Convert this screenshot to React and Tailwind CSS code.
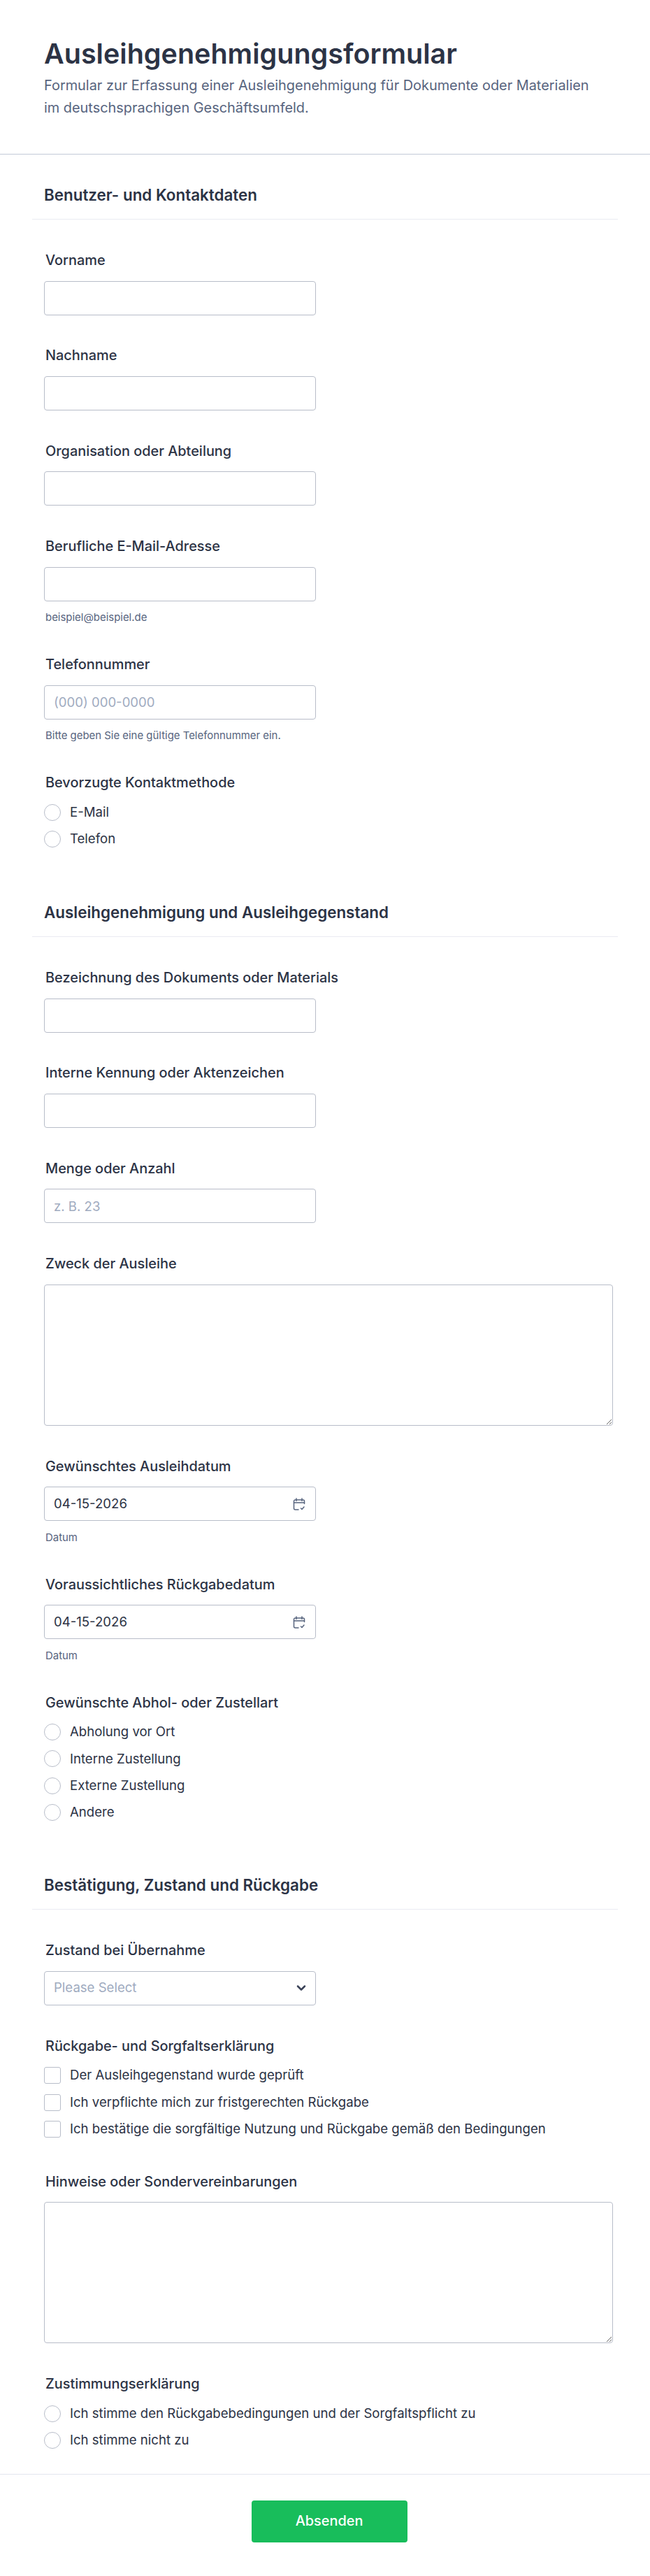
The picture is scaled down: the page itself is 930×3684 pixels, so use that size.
import React from "react";
import { ChevronDown } from "lucide-react";

function Label({ children }) {
  return <label className="block pl-[2px] text-[19.9px] leading-[24px] font-medium text-[#2c3345]">{children}</label>;
}

function Hint({ children }) {
  return <p className="mt-[14.6px] pl-[2px] text-[14.93px] leading-[18px] text-[#57647e]">{children}</p>;
}

function TextField({ label, placeholder, hint }) {
  return (
    <div className="pt-[23px] pb-[22.9px]">
      <Label>{label}</Label>
      <input
        type="text"
        placeholder={placeholder}
        className="mt-[17.5px] block h-[49px] w-[389px] rounded-[4px] border border-[#b8bdc9] bg-white px-[13px] text-[18.58px] text-[#2c3345] placeholder:text-[#9fabbf] outline-none"
      />
      {hint && <Hint>{hint}</Hint>}
    </div>
  );
}

function TextArea({ label }) {
  return (
    <div className="pt-[23px] pb-[22.9px]">
      <Label>{label}</Label>
      <textarea className="mt-[17.5px] block h-[202px] w-[814px] rounded-[4px] border border-[#b8bdc9] bg-white outline-none" />
    </div>
  );
}

function DateField({ label }) {
  return (
    <div className="pt-[23px] pb-[22.9px]">
      <Label>{label}</Label>
      <div className="mt-[17.5px] flex h-[49px] w-[389px] items-center justify-between rounded-[4px] border border-[#b8bdc9] bg-white pl-[13px] pr-[14px] text-[18.58px] text-[#2c3345]">
        <span>04-15-2026</span>
        <svg width="18" height="18" viewBox="0 0 18 18" fill="none" stroke="#57647e" strokeWidth="1.5" strokeLinecap="round" strokeLinejoin="round">
          <path d="M16.5 8.5V5a2 2 0 0 0-2-2h-11a2 2 0 0 0-2 2v10a2 2 0 0 0 2 2H8" />
          <path d="M1.5 7h15M5 1v3.5M13 1v3.5M11.5 15l1.5 1.5 3-3.5" />
        </svg>
      </div>
      <Hint>Datum</Hint>
    </div>
  );
}

function Options({ label, items, square }) {
  return (
    <div className="pt-[23px] pb-[28px]">
      <Label>{label}</Label>
      <div className="mt-[18.5px] flex flex-col gap-[14.4px]">
        {items.map((item) => (
          <div key={item} className="flex h-[24px] items-center gap-[13px] text-[18.58px] text-[#2c3345]">
            <span className={"h-[24px] w-[24px] shrink-0 border border-[#b8bdc9] bg-white " + (square ? "rounded-[3px]" : "rounded-full")} />
            <span>{item}</span>
          </div>
        ))}
      </div>
    </div>
  );
}

function SectionHead({ children }) {
  return (
    <div className="mx-[-17px] border-b border-[#eaebf2] px-[17px] pb-[18px]">
      <h2 className="text-[22.4px] leading-[32px] font-semibold text-[#2c3345]">{children}</h2>
    </div>
  );
}

export default function App() {
  return (
    <div className="min-h-[3684px] w-[930px] bg-white font-['Inter',sans-serif]">
      <header className="h-[221px] border-b border-[#c3cad8] px-[63px] pt-[49px]">
        <h1 className="text-[39.5px] leading-[56px] font-semibold text-[#2c3345]">Ausleihgenehmigungsformular</h1>
        <p className="mt-[1px] text-[19.9px] leading-[32px] font-normal text-[#57647e]">
          Formular zur Erfassung einer Ausleihgenehmigung für Dokumente oder Materialien
          <br />
          im deutschsprachigen Geschäftsumfeld.
        </p>
      </header>

      <main className="px-[63px]">
        <section className="pt-[42px]">
          <SectionHead>Benutzer- und Kontaktdaten</SectionHead>
          <div className="pt-[23px]">
            <TextField label="Vorname" />
            <TextField label="Nachname" />
            <TextField label="Organisation oder Abteilung" />
            <TextField label="Berufliche E-Mail-Adresse" hint="beispiel@beispiel.de" />
            <TextField label="Telefonnummer" placeholder="(000) 000-0000" hint="Bitte geben Sie eine gültige Telefonnummer ein." />
            <Options label="Bevorzugte Kontaktmethode" items={["E-Mail", "Telefon"]} />
          </div>
        </section>

        <section className="pt-[49px]">
          <SectionHead>Ausleihgenehmigung und Ausleihgegenstand</SectionHead>
          <div className="pt-[23px]">
            <TextField label="Bezeichnung des Dokuments oder Materials" />
            <TextField label="Interne Kennung oder Aktenzeichen" />
            <TextField label="Menge oder Anzahl" placeholder="z. B. 23" />
            <TextArea label="Zweck der Ausleihe" />
            <DateField label="Gewünschtes Ausleihdatum" />
            <DateField label="Voraussichtliches Rückgabedatum" />
            <Options label="Gewünschte Abhol- oder Zustellart" items={["Abholung vor Ort", "Interne Zustellung", "Externe Zustellung", "Andere"]} />
          </div>
        </section>

        <section className="pt-[48px]">
          <SectionHead>Bestätigung, Zustand und Rückgabe</SectionHead>
          <div className="pt-[23px]">
            <div className="pt-[23px] pb-[22.9px]">
              <Label>Zustand bei Übernahme</Label>
              <div className="mt-[17.5px] flex h-[49px] w-[389px] items-center justify-between rounded-[4px] border border-[#b8bdc9] bg-white pl-[13px] pr-[10px] text-[18.58px] text-[#9fabbf]">
                <span>Please Select</span>
                <ChevronDown size={20} strokeWidth={3} className="text-[#3a4257]" />
              </div>
            </div>
            <Options square label="Rückgabe- und Sorgfaltserklärung" items={["Der Ausleihgegenstand wurde geprüft", "Ich verpflichte mich zur fristgerechten Rückgabe", "Ich bestätige die sorgfältige Nutzung und Rückgabe gemäß den Bedingungen"]} />
            <TextArea label="Hinweise oder Sondervereinbarungen" />
            <Options label="Zustimmungserklärung" items={["Ich stimme den Rückgabebedingungen und der Sorgfaltspflicht zu", "Ich stimme nicht zu"]} />
          </div>
        </section>
      </main>

      <footer className="mt-[8px] flex justify-center border-t border-[#e3e5ee] pl-[12px] pt-[37px]">
        <button className="h-[60px] w-[223px] rounded-[4px] bg-[#18bd5b] text-[19.9px] font-medium text-white">Absenden</button>
      </footer>
    </div>
  );
}
